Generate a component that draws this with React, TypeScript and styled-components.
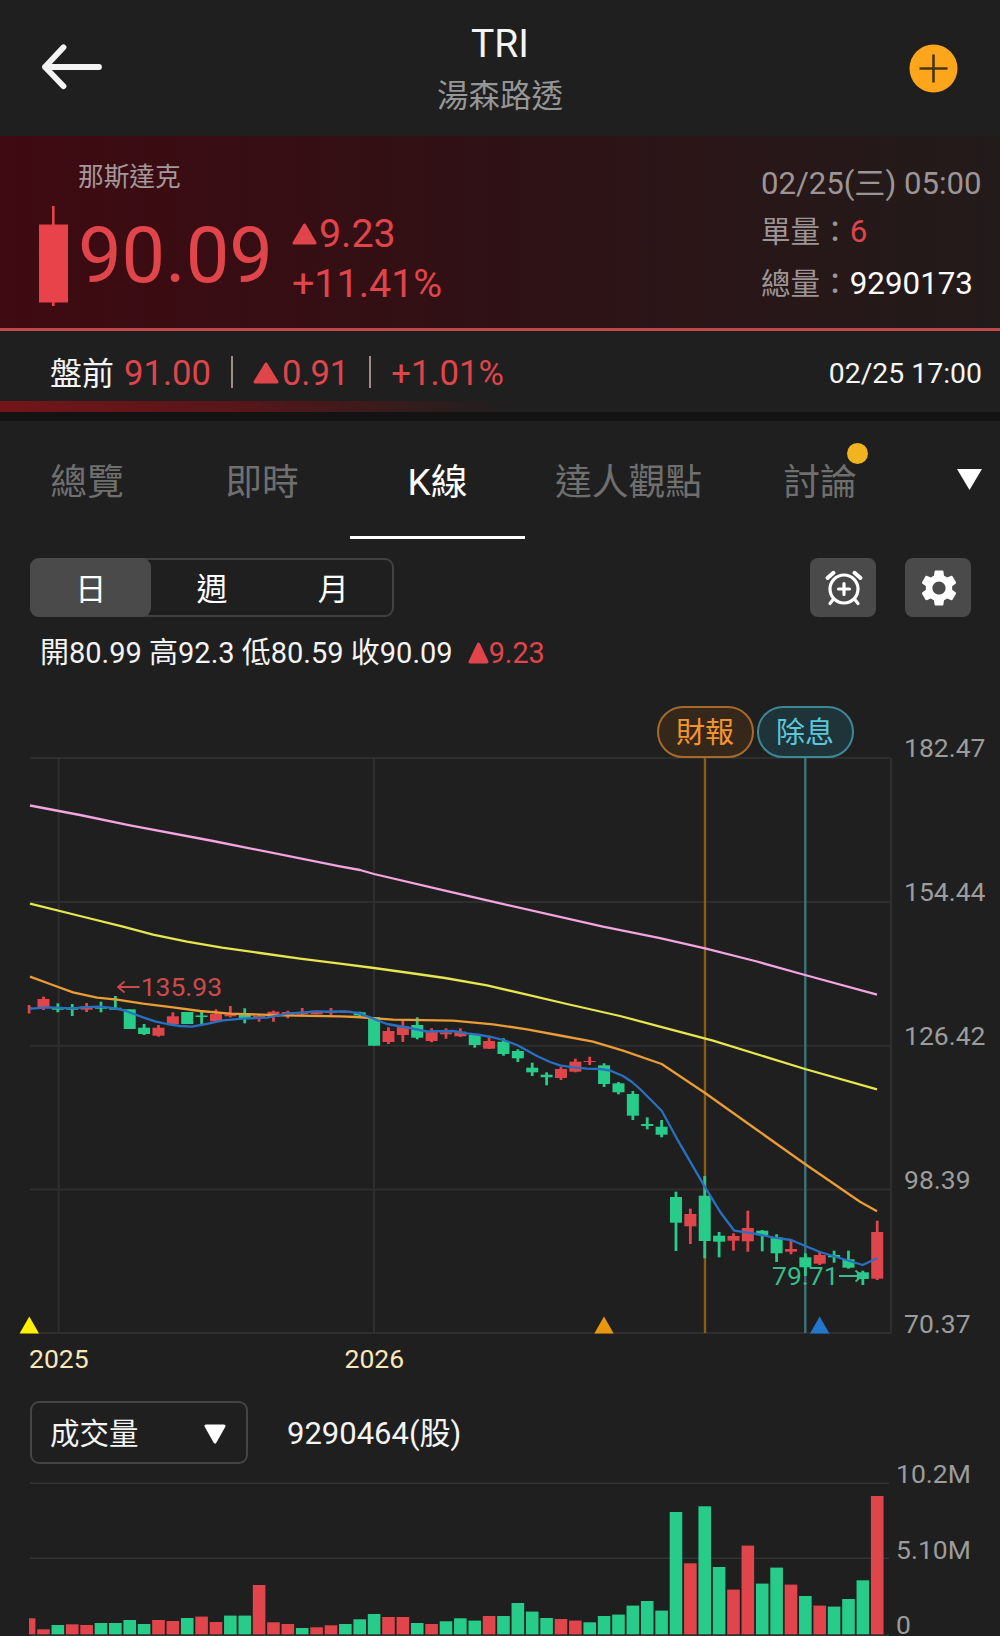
import React from "react";
import styled, { createGlobalStyle } from "styled-components";
import { MdSettings } from "react-icons/md";

const UP = "#e0454b";
const DOWN = "#27cc8b";
const BG = "#1f1f1f";

const GlobalStyle = createGlobalStyle`
  * { box-sizing: border-box; }
  body {
    margin: 0;
    background: ${BG};
    font-family: Roboto, "Noto Sans CJK TC", sans-serif;
    color: #f4f4f4;
  }
`;

const Screen = styled.main`
  display: flex;
  flex-direction: column;
  width: 1000px;
  height: 1636px;
  overflow: hidden;
  background: ${BG};
`;

const Txt = styled.span<{ $size: number; $color?: string; $lh?: number }>`
  display: block;
  font-size: ${(p) => p.$size}px;
  line-height: ${(p) => p.$lh ?? 40}px;
  color: ${(p) => p.$color ?? "#f4f4f4"};
  white-space: pre;
`;

const IconButton = styled.button`
  display: flex;
  padding: 0;
  border: 0;
  background: none;
  cursor: pointer;
`;

/* Header */
const Header = styled.header`
  display: grid;
  grid-template-columns: 200px 1fr 200px;
  height: 136px;
  padding: 0 42px 0 41px;
`;

const HeaderStart = styled.div`
  padding-top: 42px;
`;

const HeaderEnd = styled.div`
  display: flex;
  justify-content: flex-end;
  align-items: flex-start;
  padding-top: 44px;
`;

const Titles = styled.div`
  display: flex;
  flex-direction: column;
  align-items: center;
  padding: 19px 0 0 1px;
  gap: 1px;
`;

/* Quote */
const Quote = styled.section`
  display: flex;
  justify-content: space-between;
  height: 195px;
  border-bottom: 3px solid #c0484c;
  background: linear-gradient(90deg, #3f0a11 0%, #2f1115 50%, #221b1a 100%);
`;

const QuoteMain = styled.div`
  display: flex;
  flex-direction: column;
  padding: 21px 0 0 39px;
`;

const Exchange = styled.div`
  padding-left: 39px;
`;

const PriceRow = styled.div`
  display: flex;
  padding-top: 9px;
`;

const Price = styled.div`
  width: 224px;
  padding-left: 10px;
  font-size: 77.6px;
  line-height: 100px;
  color: ${UP};
`;

const Changes = styled.div`
  display: flex;
  flex-direction: column;
  padding-top: 3px;
`;

const ChangeLine = styled.div<{ $gap?: number; $height?: number }>`
  display: flex;
  align-items: center;
  height: ${(p) => p.$height ?? 50}px;
  gap: ${(p) => p.$gap ?? 0}px;
`;

const QuoteSide = styled.div`
  display: flex;
  flex-direction: column;
  width: 239px;
  padding-top: 28px;
`;

const SideLine = styled.div<{ $top: number }>`
  display: flex;
  padding-top: ${(p) => p.$top}px;
`;

/* Pre-market */
const PreMarket = styled.section`
  display: flex;
  align-items: flex-start;
  height: 70px;
  padding: 13px 18px 0 50px;
`;

const PrePrice = styled.div`
  padding-left: 10px;
`;

const PreDivider = styled.i<{ $left: number; $right: number }>`
  width: 2px;
  height: 32px;
  margin: 12px ${(p) => p.$right}px 0 ${(p) => p.$left}px;
  background: #a08c8a;
`;

const Spacer = styled.div`
  flex: 1;
`;

const GlowStrip = styled.div`
  height: 11px;
  background: linear-gradient(90deg, #731519 0%, #551619 25%, ${BG} 51%);
`;

const DarkGap = styled.div`
  height: 9px;
  background: #131313;
`;

/* Tabs */
const Tabs = styled.nav`
  display: flex;
  height: 118px;
`;

const Tab = styled.div<{ $width: number; $active?: boolean }>`
  display: flex;
  justify-content: center;
  width: ${(p) => p.$width}px;
  padding-top: 37px;
  font-size: 36.8px;
  line-height: 50px;
  color: ${(p) => (p.$active ? "#ffffff" : "#6f6f6f")};
  border-bottom: 3px solid ${(p) => (p.$active ? "#ffffff" : "transparent")};
`;

const TabLabel = styled.span`
  position: relative;
  white-space: nowrap;
`;

const Dot = styled.i`
  position: absolute;
  top: -15px;
  right: -11px;
  width: 21px;
  height: 21px;
  border-radius: 50%;
  background: #f2b41e;
`;

const MoreTabs = styled(IconButton)`
  align-items: flex-start;
  padding: 48px 0 0 49px;
`;

/* Toolbar */
const Toolbar = styled.div`
  display: flex;
  align-items: stretch;
  height: 59px;
  margin-top: 19px;
  padding: 0 29px 0 30px;
  gap: 29px;
`;

const Segments = styled.div`
  display: flex;
  width: 364px;
  border-radius: 9px;
  box-shadow: inset 0 0 0 2px #414141;
`;

const Segment = styled.button<{ $active?: boolean }>`
  flex: 1;
  padding: 4px 0 0;
  border: 0;
  border-radius: 9px;
  background: ${(p) => (p.$active ? "#4a4a4a" : "transparent")};
  color: #ffffff;
  font: 31px/40px Roboto, "Noto Sans CJK TC", sans-serif;
`;

const ToolButton = styled(IconButton)<{ $shift?: number }>`
  align-items: center;
  justify-content: center;
  width: 66px;
  padding-left: ${(p) => p.$shift ?? 0}px;
  border-radius: 8px;
  background: #4a4a4a;
  color: #ffffff;
`;

const Ohlc = styled.div`
  display: flex;
  align-items: center;
  height: 40px;
  margin-top: 16px;
  padding-left: 40px;
`;

const OhlcChange = styled.div`
  display: flex;
  align-items: center;
  padding-left: 15px;
`;

/* Charts */
const ChartArea = styled.section`
  position: relative;
  display: flex;
  height: 643px;
  margin-top: 27px;
`;

const Axis = styled.div<{ $top: number; $left: number }>`
  display: flex;
  flex-direction: column;
  padding: ${(p) => p.$top}px 0 0 ${(p) => p.$left}px;
`;

const AxisTick = styled.div<{ $step: number }>`
  flex: none;
  height: ${(p) => p.$step}px;
  font-size: 26.5px;
  line-height: 20px;
  color: #9c9c9c;

  &:last-child {
    height: 20px;
  }
`;

const EventPin = styled.div<{ $x: number; $fg: string; $line: string; $bg: string }>`
  position: absolute;
  top: 6px;
  left: ${(p) => p.$x - 48.5}px;
  width: 97px;
  height: 52px;
  border: 2px solid ${(p) => p.$line};
  border-radius: 26px;
  background: ${(p) => p.$bg};
  color: ${(p) => p.$fg};
  font-size: 29px;
  line-height: 51px;
  text-align: center;
`;

const YearRow = styled.div`
  display: flex;
  height: 33px;
  padding-left: 29px;
  gap: 256px;
`;

const IndicatorRow = styled.div`
  display: flex;
  align-items: center;
  height: 63px;
  margin-top: 25px;
  padding-left: 30px;
  gap: 39px;
`;

const Select = styled.div`
  display: flex;
  align-items: center;
  justify-content: space-between;
  width: 218px;
  height: 63px;
  padding: 2px 20px 0 18px;
  border: 2px solid #444444;
  border-radius: 9px;
`;

const IndicatorValue = styled.div`
  padding-top: 2px;
`;

const VolumeArea = styled.section`
  display: flex;
  height: 172px;
`;

const FIRST_X = 29.1;
const STEP = 14.375;
const xAt = (i: number) => FIRST_X + i * STEP;

/* [rising, body top, body bottom, wick top, wick bottom] */
const candles: [number, number, number, number, number][] = [
  [1, 1007, 1009.5, 1005, 1013.5], [1, 999, 1007.3, 996.7, 1010], [0, 1007, 1009.7, 1003.3, 1012.3],
  [0, 1007, 1009.7, 1004, 1016], [1, 1006.3, 1009.7, 1003, 1012], [0, 1006.7, 1008.7, 1001.7, 1012.3],
  [0, 1007.7, 1009.7, 996, 1010], [0, 1009.3, 1029, 1009.3, 1029], [0, 1027.7, 1034, 1024, 1035],
  [1, 1027.7, 1035.7, 1025, 1036.7], [1, 1016.3, 1024, 1012.3, 1025], [0, 1012, 1024, 1012, 1024],
  [0, 1015.5, 1017, 1011.7, 1024.3], [1, 1014, 1021.3, 1009.3, 1022.3], [1, 1014.3, 1016.3, 1006, 1017.3],
  [0, 1014, 1018, 1008.3, 1023.3], [1, 1016, 1018, 1014.7, 1021.7], [1, 1011.7, 1016.7, 1010.7, 1021.7],
  [1, 1012, 1015.3, 1010.7, 1018.3], [1, 1013, 1014.3, 1008, 1016], [1, 1010.7, 1014.3, 1010.7, 1014.3],
  [1, 1011.3, 1013, 1008, 1015], [1, 1010.7, 1012.7, 1010.7, 1012.7], [0, 1012.3, 1015.3, 1011.7, 1016.7],
  [0, 1017, 1045.7, 1017, 1045.7], [1, 1031, 1042, 1027.3, 1044], [1, 1026, 1035, 1020, 1042],
  [0, 1025, 1037.7, 1017.3, 1039.3], [1, 1031.7, 1041, 1028.3, 1042.3], [1, 1032.3, 1034.3, 1028.3, 1038.7],
  [1, 1031.7, 1036.3, 1028.3, 1037], [0, 1035, 1045, 1034, 1047.7], [1, 1041, 1048.7, 1035.7, 1049],
  [0, 1041.7, 1054, 1038.3, 1055.7], [0, 1051, 1058.3, 1049.3, 1062], [0, 1067.7, 1072.3, 1062.7, 1076],
  [0, 1074.7, 1077.3, 1072.3, 1085.3], [1, 1069, 1078, 1066.7, 1080], [1, 1061.7, 1071.7, 1058.7, 1072.3],
  [1, 1061, 1062, 1056.7, 1065], [0, 1065.3, 1084, 1063.3, 1087], [0, 1083.3, 1092.3, 1082, 1094.3],
  [0, 1094, 1115.7, 1091, 1120], [0, 1124, 1126, 1117.3, 1129.3], [0, 1126.7, 1134.7, 1120, 1137.3],
  [0, 1197, 1222.7, 1191.7, 1251], [1, 1214, 1226.3, 1208.7, 1244], [0, 1195.7, 1241, 1176, 1258.3],
  [0, 1235.7, 1241.7, 1232, 1257.3], [1, 1236, 1240.7, 1233.3, 1250.7], [1, 1228, 1241.3, 1210.7, 1251.7],
  [0, 1230.7, 1235.3, 1230, 1251.3], [0, 1237.3, 1253.3, 1234.3, 1262], [1, 1249, 1251.7, 1239.3, 1254.3],
  [0, 1257.3, 1267.3, 1253.3, 1276], [1, 1255, 1263.7, 1252, 1265], [0, 1255, 1257.3, 1250.7, 1262.7],
  [0, 1259.3, 1267.7, 1250.7, 1268.7], [0, 1272.3, 1279, 1270.7, 1285], [1, 1232, 1278.7, 1220.7, 1280],
];

/* [rising, bar height] */
const volumes: [number, number][] = [
  [1, 16], [1, 5], [0, 9.3], [1, 10], [1, 9.3], [0, 11.3], [0, 11.3], [0, 14.3], [0, 10.3], [1, 14.3],
  [1, 13.3], [0, 16.3], [1, 17.7], [1, 12.3], [0, 18.7], [0, 18.7], [1, 49.3], [1, 12], [1, 10.3], [0, 6.3],
  [1, 7], [1, 9], [0, 10.3], [0, 15], [0, 20.3], [1, 17.3], [1, 17.3], [0, 11.3], [1, 10.3], [0, 13],
  [0, 16], [0, 13.7], [1, 18.3], [0, 18.3], [0, 31.3], [0, 22.7], [0, 16.3], [1, 15.3], [1, 13.7], [0, 12],
  [0, 18.3], [0, 19.7], [0, 28.7], [0, 33.3], [0, 23.7], [0, 122.3], [1, 71], [0, 128], [0, 67.3], [1, 44.7],
  [1, 88.7], [0, 50.7], [0, 66.7], [1, 49.7], [0, 38.3], [1, 28.7], [0, 27.7], [0, 35.3], [0, 54], [1, 138.3],
];

const averages = [
  {
    color: "#f2a5e0",
    points:
      "30,805.5 80,815 130,825.3 213,841 340,866.3 360,870 374,874 445,890.7 497,902.7 603,926.7 660,938.2 705,948.3 755,961 805,975 877,994.7",
  },
  {
    color: "#e6e650",
    points:
      "30,903.7 80,916 123,926.7 153,934.7 187,941.7 222,947.6 260,953 300,958.7 340,963.7 374,968 410,973 445,978 487,985.3 527,994.7 567,1004 620,1016 660,1026.7 713,1040.7 805,1069 877,1089.3",
  },
  {
    color: "#ea9d35",
    points:
      "30,976.7 50,984 73,992.3 97,997.7 117,999.7 143,1003.7 173,1007.3 200,1011 230,1013.7 283,1015.3 340,1016.3 357,1017 393,1019.7 453,1020.7 493,1024.3 527,1029.3 560,1035.5 593,1041.7 623,1050.7 661.7,1064 704.7,1092.7 755,1128.5 805,1164 860,1201.7 877,1211.3",
  },
  {
    color: "#2870c2",
    points:
      "30,1008.7 50,1007.3 72,1008.3 84,1007.4 97,1006.7 110,1007.6 123,1010 143,1017.3 155,1021.4 167,1024 180,1026 192,1026.7 207,1023.9 223,1020.4 243,1018.7 267,1017.6 287,1013.6 313,1011.7 343,1011.3 358,1012.8 370,1017.3 387,1024 407,1027.5 427,1031.5 453,1031 467,1033.3 480,1035 493,1037.3 505,1040.5 517,1045 537,1056 550,1062 560,1065.3 573,1067.4 587,1068.7 600,1069 610,1070.5 623,1076 632,1082 640,1089 650,1099 661.7,1110.7 676.7,1138.3 704.7,1186.7 720,1211.7 734.3,1230.7 753,1233.3 773,1237.3 791,1240 820,1252 862.7,1265 877,1258.3",
  },
];

function Triangle({ w, h, color, down }: { w: number; h: number; color: string; down?: boolean }) {
  const d = down ? `M2 2H${w - 2}L${w / 2} ${h - 2}Z` : `M${w / 2} 2L${w - 2} ${h - 2}H2Z`;
  return (
    <svg width={w} height={h} viewBox={`0 0 ${w} ${h}`}>
      <path d={d} fill={color} stroke={color} strokeWidth="3" strokeLinejoin="round" />
    </svg>
  );
}

function BackIcon() {
  return (
    <svg width="62" height="50" viewBox="0 0 62 50" fill="none" stroke="#f4f4f4" strokeWidth="5.8" strokeLinecap="round" strokeLinejoin="round">
      <path d="M58 25H4M22.5 5.3L4 25L22.5 44.2" />
    </svg>
  );
}

function AddIcon() {
  return (
    <svg width="49" height="49" viewBox="0 0 49 49">
      <circle cx="24.5" cy="24.5" r="24" fill="#fda51b" />
      <path d="M10.5 24.5H38.5M24.5 10.5V38.5" stroke="#4a3413" strokeWidth="2.6" />
    </svg>
  );
}

function HeroCandle() {
  return (
    <svg width="29" height="102" viewBox="0 0 29 102">
      <rect x="13" y="0" width="2.6" height="100" fill={UP} />
      <rect x="0" y="18.5" width="29" height="78" fill="#e8434b" />
    </svg>
  );
}

function AlarmIcon() {
  return (
    <svg width="44" height="44" viewBox="0 0 44 44" fill="none" stroke="#fff" strokeWidth="3.2" strokeLinecap="round">
      <circle cx="23" cy="23" r="14" />
      <path d="M23 17.5V28.5M17.5 23H28.5" />
      <path d="M12.2 33.5L9 37.5M33.8 33.5L37 37.5" />
      <path d="M6.5 12L12.5 6.8M39.5 12L33.5 6.8" strokeWidth="4" />
    </svg>
  );
}

function PriceChart() {
  return (
    <svg width="893" height="643" viewBox="0 700 893 643">
      <g stroke="#2e2e2e" strokeWidth="2">
        {[758, 902, 1045.7, 1189.5, 1333].map((y) => (
          <path key={y} d={`M30 ${y}H891`} />
        ))}
        {[58.7, 374, 891].map((x) => (
          <path key={x} d={`M${x} 758V1334`} />
        ))}
      </g>
      <path d="M705 758V1333" stroke="#8a5a18" strokeWidth="2.4" />
      <path d="M805.3 758V1333" stroke="#3c7378" strokeWidth="2.4" />
      {candles.map(([up, top, bottom, high, low], i) => (
        <g key={i} fill={up ? UP : DOWN}>
          <rect x={xAt(i) - 1.4} y={high} width="2.8" height={low - high} />
          <rect x={Math.max(xAt(i) - 6, 28.5)} y={top} width={i === 0 ? 3 : 12} height={bottom - top} />
        </g>
      ))}
      {averages.map((a) => (
        <polyline key={a.color} points={a.points} fill="none" stroke={a.color} strokeWidth="2.3" strokeLinejoin="round" />
      ))}
      <path d="M139.5 987H118M124.5 981.5L118 987L124.5 992.5" fill="none" stroke="#cc4a4c" strokeWidth="1.8" />
      <text x="140.7" y="996.4" fontSize="26.5" fill="#cc4a4c">135.93</text>
      <text x="772" y="1285" fontSize="26.5" fill="#35bd8a">79.71</text>
      <path d="M839 1276H862M855.5 1270.5L862 1276L855.5 1281.5" fill="none" stroke="#35bd8a" strokeWidth="1.8" />
      <path d="M29.3 1316.5L39 1333.5H19.6Z" fill="#fff200" />
      <path d="M604 1316.5L613.7 1333.5H594.3Z" fill="#e8980e" />
      <path d="M819.7 1316.5L829.4 1333.5H810Z" fill="#2277cc" />
    </svg>
  );
}

function VolumeChart() {
  return (
    <svg width="889" height="172" viewBox="0 1464 889 172">
      <g stroke="#333333" strokeWidth="1.6">
        <path d="M30 1483.3H889M30 1558.3H889M30 1635.2H889" />
      </g>
      {volumes.map(([up, h], i) => {
        const left = Math.max(xAt(i) - 6.3, 29);
        return (
          <rect key={i} x={left} y={1634.3 - h} width={xAt(i) + 6.3 - left} height={h} fill={up ? UP : DOWN} />
        );
      })}
    </svg>
  );
}

const priceTicks = ["182.47", "154.44", "126.42", "98.39", "70.37"];
const volumeTicks = ["10.2M", "5.10M", "0"];

export default function App() {
  return (
    <>
      <GlobalStyle />
      <Screen>
        <Header>
          <HeaderStart>
            <IconButton aria-label="返回"><BackIcon /></IconButton>
          </HeaderStart>
          <Titles>
            <Txt $size={39} $lh={50}>TRI</Txt>
            <Txt $size={31.5} $lh={54} $color="#969696">湯森路透</Txt>
          </Titles>
          <HeaderEnd>
            <IconButton aria-label="加入"><AddIcon /></IconButton>
          </HeaderEnd>
        </Header>

        <Quote>
          <QuoteMain>
            <Exchange>
              <Txt $size={25.7} $color="#a3989a">那斯達克</Txt>
            </Exchange>
            <PriceRow>
              <HeroCandle />
              <Price>90.09</Price>
              <Changes>
                <ChangeLine $gap={2}>
                  <Triangle w={25} h={22} color={UP} />
                  <Txt $size={39.3} $lh={50} $color={UP}>9.23</Txt>
                </ChangeLine>
                <ChangeLine>
                  <Txt $size={39.4} $lh={50} $color={UP}>+11.41%</Txt>
                </ChangeLine>
              </Changes>
            </PriceRow>
          </QuoteMain>
          <QuoteSide>
            <Txt $size={31.1} $color="#9d9595">02/25(三) 05:00</Txt>
            <SideLine $top={8}>
              <Txt $size={29.6} $color="#9d9595">單量：</Txt>
              <Txt $size={31.3} $color={UP}>6</Txt>
            </SideLine>
            <SideLine $top={12}>
              <Txt $size={29.6} $color="#9d9595">總量：</Txt>
              <Txt $size={31.3} $color="#ffffff">9290173</Txt>
            </SideLine>
          </QuoteSide>
        </Quote>

        <PreMarket>
          <Txt $size={32} $lh={60}>盤前</Txt>
          <PrePrice>
            <Txt $size={34.6} $lh={58} $color={UP}>91.00</Txt>
          </PrePrice>
          <PreDivider $left={20} $right={20} />
          <ChangeLine $gap={3} $height={58}>
            <Triangle w={26} h={22} color={UP} />
            <Txt $size={34.6} $lh={58} $color={UP}>0.91</Txt>
          </ChangeLine>
          <PreDivider $left={20} $right={20} />
          <Txt $size={34.7} $lh={58} $color={UP}>+1.01%</Txt>
          <Spacer />
          <Txt $size={28.4} $lh={59}>02/25 17:00</Txt>
        </PreMarket>
        <GlowStrip />
        <DarkGap />

        <Tabs>
          <Tab $width={174}><TabLabel>總覽</TabLabel></Tab>
          <Tab $width={176}><TabLabel>即時</TabLabel></Tab>
          <Tab $width={175} $active><TabLabel>K線</TabLabel></Tab>
          <Tab $width={207}><TabLabel>達人觀點</TabLabel></Tab>
          <Tab $width={176}><TabLabel>討論<Dot /></TabLabel></Tab>
          <MoreTabs aria-label="更多">
            <svg width="25" height="21" viewBox="0 0 25 21"><path d="M0 0H25L12.5 21Z" fill="#fff" /></svg>
          </MoreTabs>
        </Tabs>

        <Toolbar>
          <Segments>
            <Segment $active>日</Segment>
            <Segment>週</Segment>
            <Segment>月</Segment>
          </Segments>
          <Spacer />
          <ToolButton aria-label="提醒"><AlarmIcon /></ToolButton>
          <ToolButton aria-label="設定" $shift={2}><MdSettings size={44} /></ToolButton>
        </Toolbar>

        <Ohlc>
          <Txt $size={29}>開80.99 高92.3 低80.59 收90.09</Txt>
          <OhlcChange>
            <Triangle w={21} h={22} color={UP} />
            <Txt $size={28.8} $color={UP}>9.23</Txt>
          </OhlcChange>
        </Ohlc>

        <ChartArea>
          <PriceChart />
          <EventPin $x={705} $fg="#f3952f" $line="#a56a2a" $bg="#35281a">財報</EventPin>
          <EventPin $x={805} $fg="#5cc6da" $line="#3f8796" $bg="#1e3439">除息</EventPin>
          <Axis $top={38} $left={11}>
            {priceTicks.map((t) => (
              <AxisTick key={t} $step={144}>{t}</AxisTick>
            ))}
          </Axis>
        </ChartArea>

        <YearRow>
          <Txt $size={26.5} $lh={31} $color="#fde7b8">2025</Txt>
          <Txt $size={26.5} $lh={31} $color="#fde7b8">2026</Txt>
        </YearRow>

        <IndicatorRow>
          <Select>
            <Txt $size={29.5}>成交量</Txt>
            <Triangle w={22} h={20} color="#ffffff" down />
          </Select>
          <IndicatorValue>
            <Txt $size={31} $lh={42}>9290464(股)</Txt>
          </IndicatorValue>
        </IndicatorRow>

        <VolumeArea>
          <VolumeChart />
          <Axis $top={0} $left={7}>
            {volumeTicks.map((t) => (
              <AxisTick key={t} $step={75.5}>{t}</AxisTick>
            ))}
          </Axis>
        </VolumeArea>
      </Screen>
    </>
  );
}
